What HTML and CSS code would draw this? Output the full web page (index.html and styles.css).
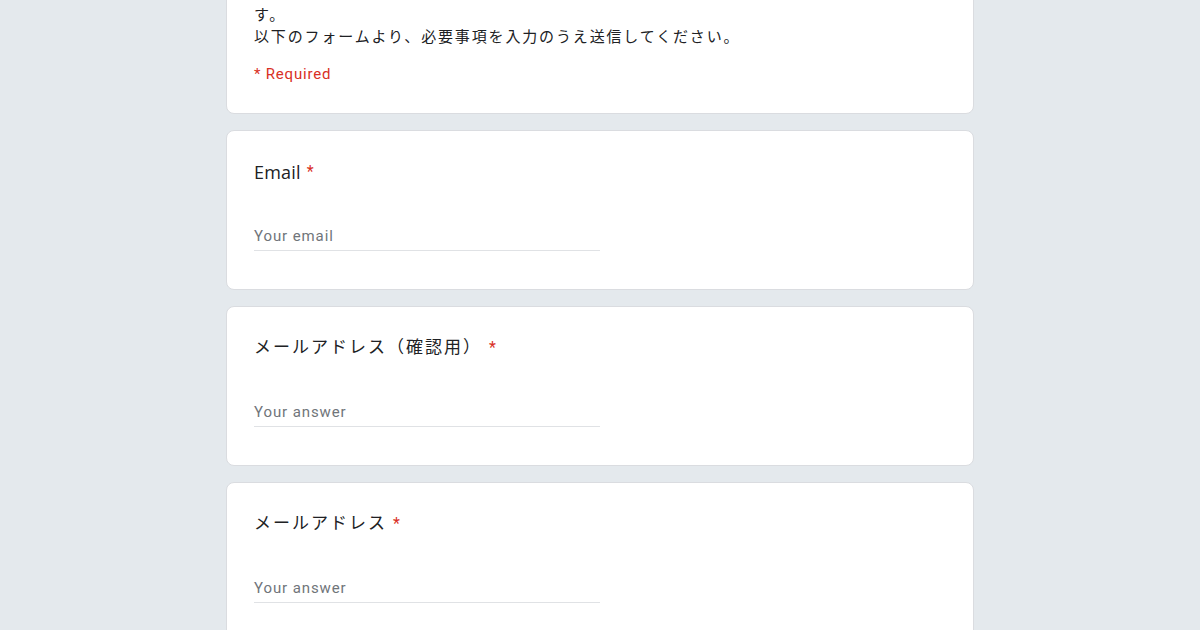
FILE: index.html
```html
<!DOCTYPE html>
<html lang="ja">
<head>
<meta charset="utf-8">
<title>Form</title>
<link rel="stylesheet" href="styles.css">
</head>
<body>
<main class="page">
  <section class="card header-card">
    <div class="desc">
      <p class="desc-line">す。</p>
      <p class="desc-line">以下のフォームより、必要事項を入力のうえ送信してください。</p>
    </div>
    <div class="required-note">* Required</div>
  </section>

  <section class="card question">
    <div class="q-title"><span class="q-text en">Email</span><span class="star">*</span></div>
    <div class="input"><span class="placeholder">Your email</span></div>
  </section>

  <section class="card question">
    <div class="q-title"><span class="q-text">メールアドレス（確認用）</span><span class="star star-wide">*</span></div>
    <div class="input"><span class="placeholder">Your answer</span></div>
  </section>

  <section class="card question">
    <div class="q-title"><span class="q-text">メールアドレス</span><span class="star">*</span></div>
    <div class="input"><span class="placeholder">Your answer</span></div>
  </section>
</main>
</body>
</html>
```

FILE: styles.css
```css
* { box-sizing: border-box; }

html, body {
  margin: 0;
  padding: 0;
  background: #e4e9ed;
  height: 630px;
  overflow: hidden;
}

body {
  font-family: Roboto, "Noto Sans CJK JP", sans-serif;
  color: #202124;
}

.page {
  width: 748px;
  margin: -21px auto 0;
  display: flex;
  flex-direction: column;
  gap: 16px;
}

.card {
  background: #ffffff;
  border: 1px solid #dadce0;
  border-radius: 8px;
  padding: 0 27px;
}

.header-card {
  padding-top: 23px;
  padding-bottom: 29px;
}

.desc-line {
  margin: 0;
  font-size: 15px;
  line-height: 22px;
  letter-spacing: 1.85px;
  font-family: "Noto Sans CJK JP", sans-serif;
  color: #202124;
}

.required-note {
  margin-top: 17px;
  font-size: 15px;
  line-height: 20px;
  color: #d93025;
  letter-spacing: 0.8px;
}

.question {
  padding-top: 29px;
  padding-bottom: 38px;
}

.q-title {
  font-size: 16px;
  line-height: 24px;
  height: 24px;
  display: flex;
  align-items: center;
}

.q-text {
  font-family: "Noto Sans CJK JP", sans-serif;
  font-size: 17px;
  letter-spacing: 2px;
  padding-bottom: 4px;
  color: #202124;
}

.q-text.en {
  font-family: "Open Sans", Roboto, sans-serif;
  font-size: 18px;
  letter-spacing: 0.2px;
  padding-bottom: 0;
}

.star {
  color: #d93025;
  margin-left: 6px;
  font-size: 16px;
}

.star-wide {
  margin-left: 7px;
}

.input {
  margin-top: 36px;
  width: 346px;
  padding: 6px 0 4px;
  line-height: 20px;
  border-bottom: 1px solid #e0e2e5;
}

.placeholder {
  font-size: 15px;
  color: #70757a;
  letter-spacing: 0.9px;
}
```
